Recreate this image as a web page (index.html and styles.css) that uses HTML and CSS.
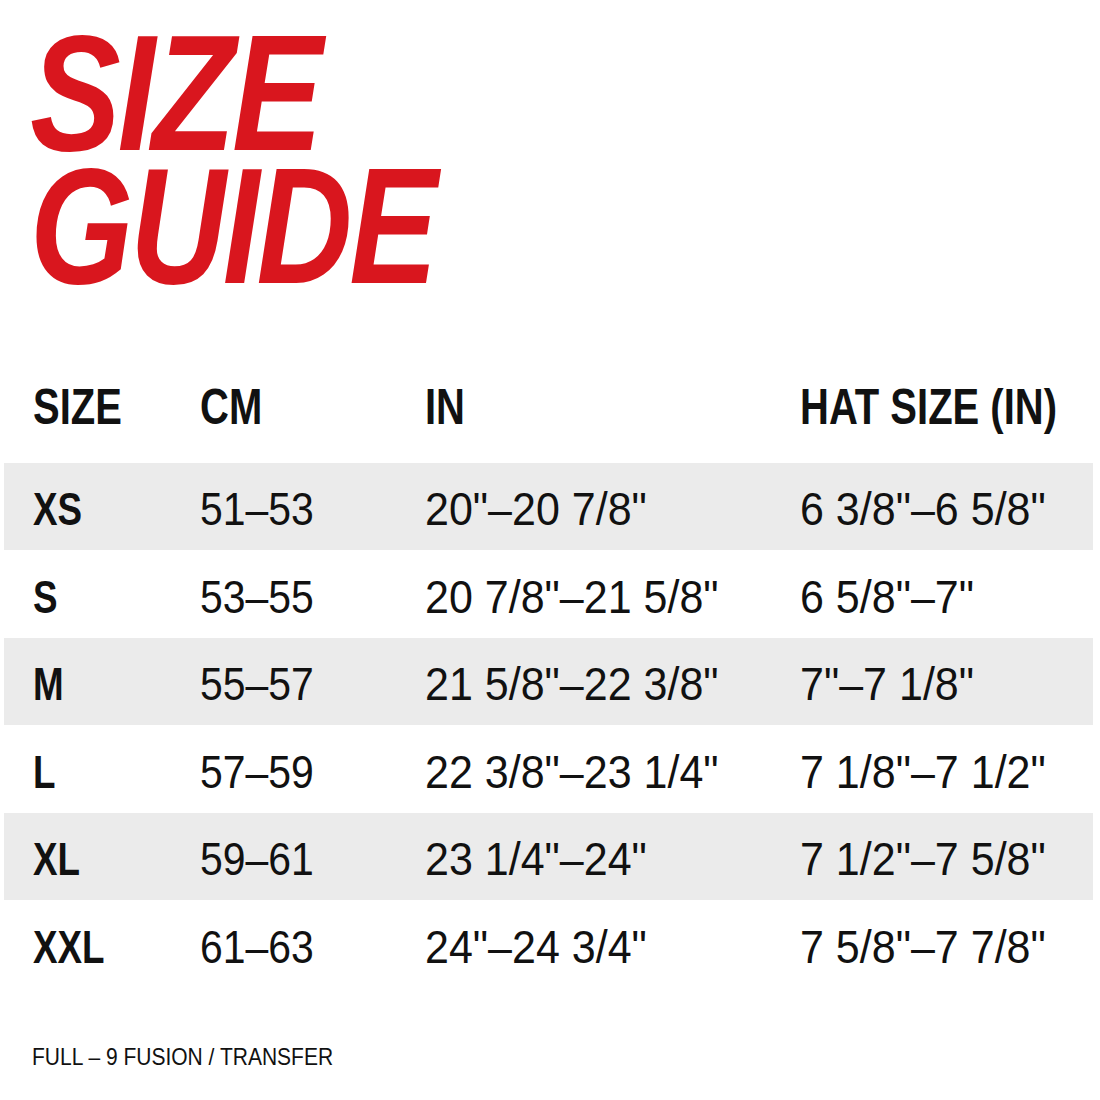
FILE: index.html
```html
<!DOCTYPE html>
<html>
<head>
<meta charset="utf-8">
<link rel="stylesheet" href="styles.css">
</head>
<body>
<div class="page">
  <h1 class="title"><span class="t1">SIZE</span><span class="t2">GUIDE</span></h1>
  <div class="table">
    <div class="row head"><div><span>SIZE</span></div><div><span>CM</span></div><div><span>IN</span></div><div><span>HAT SIZE (IN)</span></div></div>
    <div class="row shade"><div class="sz"><span>XS</span></div><div><span>51–53</span></div><div><span>20"–20 7/8"</span></div><div><span>6 3/8"–6 5/8"</span></div></div>
    <div class="row"><div class="sz"><span>S</span></div><div><span>53–55</span></div><div><span>20 7/8"–21 5/8"</span></div><div><span>6 5/8"–7"</span></div></div>
    <div class="row shade"><div class="sz"><span>M</span></div><div><span>55–57</span></div><div><span>21 5/8"–22 3/8"</span></div><div><span>7"–7 1/8"</span></div></div>
    <div class="row"><div class="sz"><span>L</span></div><div><span>57–59</span></div><div><span>22 3/8"–23 1/4"</span></div><div><span>7 1/8"–7 1/2"</span></div></div>
    <div class="row shade"><div class="sz"><span>XL</span></div><div><span>59–61</span></div><div><span>23 1/4"–24"</span></div><div><span>7 1/2"–7 5/8"</span></div></div>
    <div class="row"><div class="sz"><span>XXL</span></div><div><span>61–63</span></div><div><span>24"–24 3/4"</span></div><div><span>7 5/8"–7 7/8"</span></div></div>
  </div>
  <div class="foot"><span>FULL – 9 FUSION / TRANSFER</span></div>
</div>
</body>
</html>
```
FILE: styles.css
```css
html, body { margin: 0; padding: 0; background: #fff; }
.page {
  width: 1100px;
  height: 1100px;
  overflow: hidden;
  font-family: "Liberation Sans", Arial, sans-serif;
  color: #111;
  display: flex;
  flex-direction: column;
}
.title {
  margin: 0;
  padding: 26px 0 0 30px;
  display: flex;
  flex-direction: column;
  align-items: flex-start;
  font-size: 166px;
  line-height: 133px;
  font-weight: 700;
  font-style: italic;
  color: #d9161e;
  letter-spacing: -4px;
}
.title span {
  display: inline-block;
  white-space: nowrap;
  transform-origin: left center;
}
.t1 { transform: scaleX(0.82); }
.t2 { transform: scaleX(0.80); }
.table {
  margin: 85px 7px 0 4px;
  display: flex;
  flex-direction: column;
}
.row {
  display: grid;
  grid-template-columns: 167px 225px 375px 1fr;
  align-items: center;
  height: 87.5px;
  padding: 6px 0 0 29px;
  box-sizing: border-box;
  font-size: 46px;
  white-space: nowrap;
}
.row span {
  display: inline-block;
  transform-origin: left center;
  transform: scaleX(0.89);
}
.row div:nth-child(n+3) span { transform: scaleX(0.935); }
.row.head {
  height: 85.5px;
  padding-top: 0;
  align-items: start;
  font-weight: 700;
  font-size: 50px;
  line-height: 60px;
}
.row.head div span { transform: scaleX(0.8); }
.row.shade { background: #ebebeb; }
.sz { font-weight: 700; }
.row .sz span { transform: scaleX(0.8); }
.foot {
  margin: 55px 0 0 32px;
  font-size: 24px;
  white-space: nowrap;
}
.foot span {
  display: inline-block;
  transform-origin: left center;
  transform: scaleX(0.875);
}
```
